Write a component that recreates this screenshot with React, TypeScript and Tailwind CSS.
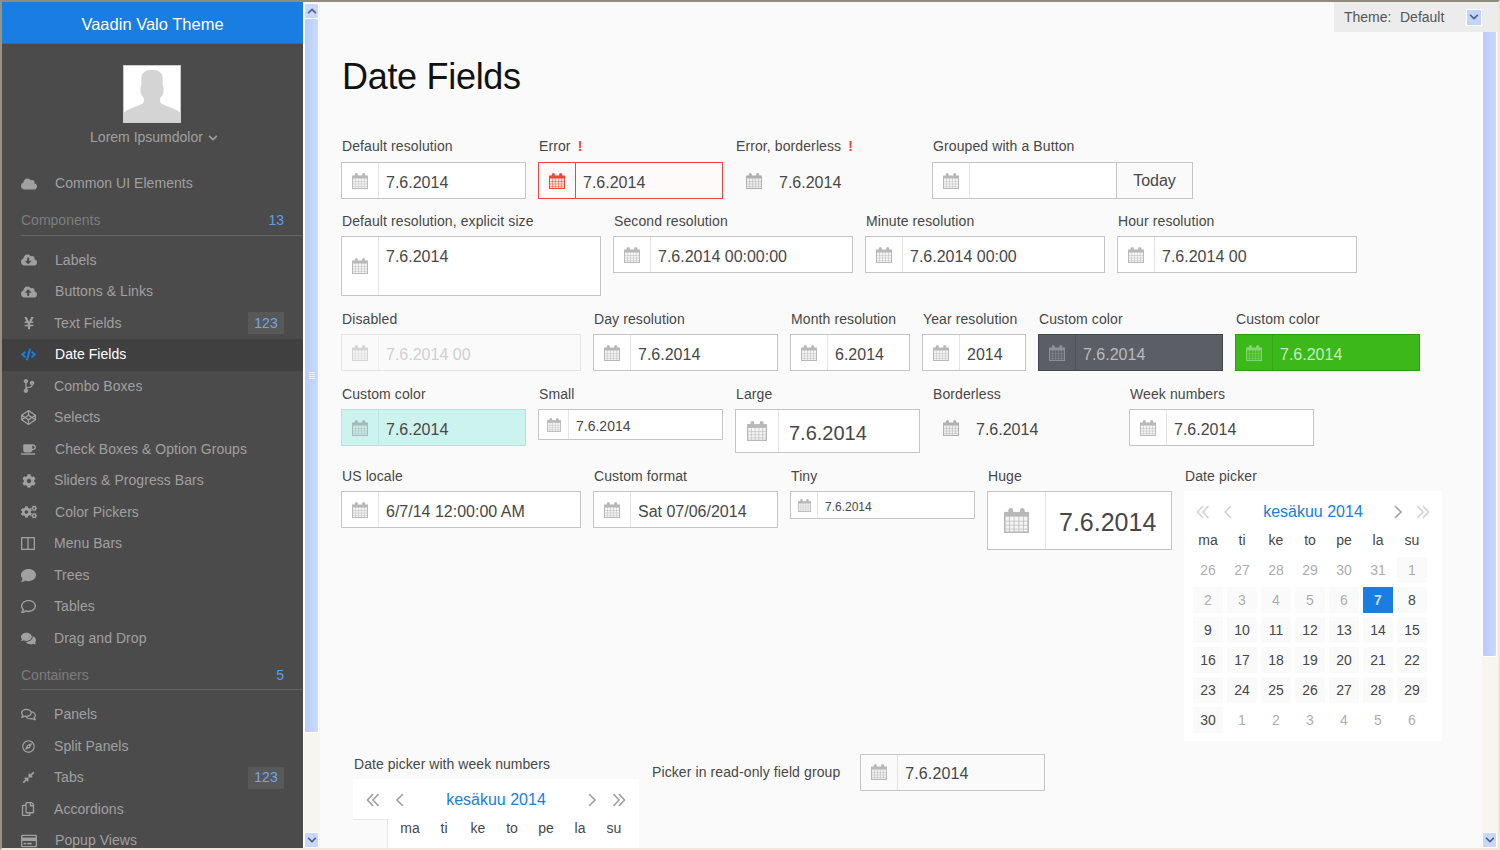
import type { ReactNode } from "react";
import {
  FaChevronDown,
  FaChevronUp,
  FaCloud,
  FaCloudDownloadAlt,
  FaCloudUploadAlt,
  FaCode,
  FaCodeBranch,
  FaCodepen,
  FaCoffee,
  FaCog,
  FaCogs,
  FaComment,
  FaComments,
  FaCompressAlt,
  FaRegComment,
  FaRegComments,
  FaRegCompass,
  FaRegCopy,
  FaRegCreditCard,
  FaYenSign,
} from "react-icons/fa";

const font = "font-['Liberation_Sans',Arial,sans-serif]";

function CalendarIcon({ size = 16 }: { size?: number }) {
  return (
    <svg width={size} height={size} viewBox="0 0 16 16" fill="none">
      <rect x="0.5" y="3" width="15" height="12.5" fill="currentColor" fillOpacity="0.15" stroke="currentColor" />
      <rect x="0" y="3" width="16" height="2.5" fill="currentColor" />
      <rect x="2.8" y="0" width="3" height="4.5" rx="1.5" fill="currentColor" />
      <rect x="10.2" y="0" width="3" height="4.5" rx="1.5" fill="currentColor" />
      <path
        d="M0 8.5H16M0 11H16M0 13.5H16M3.5 5V16M6.5 5V16M9.5 5V16M12.5 5V16"
        stroke="currentColor"
        strokeOpacity="0.75"
        strokeWidth="0.6"
      />
    </svg>
  );
}

function ColumnsIcon() {
  return (
    <svg width="14" height="13" viewBox="0 0 14 13" fill="none" stroke="currentColor" strokeWidth="1.3">
      <rect x="0.65" y="0.65" width="12.7" height="11.7" />
      <path d="M7 0.65V12.35" />
    </svg>
  );
}

function Angle({ dir, double, className = "" }: { dir: "left" | "right"; double?: boolean; className?: string }) {
  const d = double ? "M7 1L1.5 7L7 13M12.5 1L7 7L12.5 13" : "M10 1L4 7L10 13";
  return (
    <svg
      width="14"
      height="14"
      viewBox="0 0 14 14"
      fill="none"
      stroke="currentColor"
      strokeWidth="1.6"
      className={`${dir === "right" ? "rotate-180" : ""} ${className}`}
    >
      <path d={d} />
    </svg>
  );
}

function Avatar() {
  return (
    <svg width="58" height="58" viewBox="0 0 58 58" className="mr-[2px] border border-[#cccccc] bg-white">
      <path
        d="M0 58V48C5 44 13 42 19 39C21 38 21 35 20 32C18 31 17 28 17 25C17 23 17 21 18 20V12C18 7 23 4 29 4C35 4 40 7 40 12V20C41 21 41 23 41 25C41 28 40 31 38 32C37 35 37 38 39 39C45 42 53 44 58 48V58Z"
        fill="#d4d4d4"
      />
    </svg>
  );
}

type NavItem = { icon: ReactNode; label: string; badge?: string; active?: boolean; far?: boolean };

const components: NavItem[] = [
  { icon: <FaCloudDownloadAlt size={16} />, label: "Labels", far: true },
  { icon: <FaCloudUploadAlt size={16} />, label: "Buttons & Links", far: true },
  { icon: <FaYenSign size={14} className="ml-[1px]" />, label: "Text Fields", badge: "123" },
  { icon: <FaCode size={15} />, label: "Date Fields", active: true, far: true },
  { icon: <FaCodeBranch size={14} className="ml-[1px]" />, label: "Combo Boxes" },
  { icon: <FaCodepen size={15} />, label: "Selects" },
  { icon: <FaCoffee size={15} />, label: "Check Boxes & Option Groups", far: true },
  { icon: <FaCog size={14} className="ml-[1px]" />, label: "Sliders & Progress Bars" },
  { icon: <FaCogs size={16} />, label: "Color Pickers", far: true },
  { icon: <ColumnsIcon />, label: "Menu Bars" },
  { icon: <FaComment size={15} />, label: "Trees" },
  { icon: <FaRegComment size={15} />, label: "Tables" },
  { icon: <FaComments size={15} />, label: "Drag and Drop" },
];

const containers: NavItem[] = [
  { icon: <FaRegComments size={15} />, label: "Panels" },
  { icon: <FaRegCompass size={13} className="ml-[1px]" />, label: "Split Panels" },
  { icon: <FaCompressAlt size={13} className="ml-[1px]" />, label: "Tabs", badge: "123" },
  { icon: <FaRegCopy size={14} />, label: "Accordions" },
  { icon: <FaRegCreditCard size={16} />, label: "Popup Views", far: true },
];

function NavRow({ item }: { item: NavItem }) {
  return (
    <div
      className={`flex h-[31.5px] items-center pl-[19px] pr-[19px] text-[14px] tracking-[0.05px] ${
        item.active ? "bg-[#404040] text-white" : "text-[#a0a0a0]"
      }`}
    >
      <span className={`${item.far ? "w-[34px]" : "w-[33px]"} ${item.active ? "text-[#197de1]" : ""}`}>{item.icon}</span>
      <span className="flex-1">{item.label}</span>
      {item.badge && (
        <span className="flex h-[22px] w-[36px] items-center justify-center bg-[#585858] text-[#6fa8e6]">{item.badge}</span>
      )}
    </div>
  );
}

function NavSection({ title, count }: { title: string; count: string }) {
  return (
    <div className="mb-[9px] ml-[19px] flex h-[36px] items-center justify-between border-b border-[#626262] pr-[19px] pt-[7px] text-[14px]">
      <span className="text-[#7d7d7d]">{title}</span>
      <span className="text-[#5f9fe6]">{count}</span>
    </div>
  );
}

function Sidebar() {
  return (
    <aside className="h-full w-[301px] shrink-0 overflow-hidden bg-[#4b4b4b]">
      <div className="flex h-[42px] items-center justify-center border-b border-[#1a6fc4] bg-[#197de1] pt-[3px] text-[16.5px] text-white">
        Vaadin Valo Theme
      </div>
      <div className="flex flex-col items-center pt-[21px]">
        <Avatar />
        <div className="ml-[3px] mt-1 flex h-5 items-center gap-[5px] text-[14px] text-[#a0a0a0]">
          Lorem Ipsumdolor
          <FaChevronDown size={10} className="mt-[2px]" />
        </div>
      </div>
      <div className="mt-[21px]">
        <NavRow item={{ icon: <FaCloud size={16} />, label: "Common UI Elements", far: true }} />
        <NavSection title="Components" count="13" />
        {components.map((item) => (
          <NavRow key={item.label} item={item} />
        ))}
        <NavSection title="Containers" count="5" />
        {containers.map((item) => (
          <NavRow key={item.label} item={item} />
        ))}
      </div>
    </aside>
  );
}

function ScrollButton({ up }: { up?: boolean }) {
  return (
    <div className="flex h-4 w-[15px] shrink-0 items-center justify-center rounded-[2px] border border-white bg-[#c8d7fb] text-[#4d6185]">
      {up ? <FaChevronUp size={10} /> : <FaChevronDown size={10} />}
    </div>
  );
}

function Scrollbar({ thumb, grip }: { thumb: string; grip?: boolean }) {
  return (
    <div className="flex h-full w-4 shrink-0 flex-col bg-[#f6f5ee] pt-px">
      <ScrollButton up />
      <div
        className={`${thumb} flex w-[15px] shrink-0 flex-col items-center justify-center gap-px rounded-[2px] border-x border-b border-white bg-gradient-to-r from-[#b9ccf8] to-[#cbd9fb]`}
      >
        {grip && (
          <>
            <span className="h-px w-[6px] bg-[#eef2ff]" />
            <span className="h-px w-[6px] bg-[#eef2ff]" />
            <span className="h-px w-[6px] bg-[#eef2ff]" />
            <span className="h-px w-[6px] bg-[#eef2ff]" />
          </>
        )}
      </div>
      <div className="flex-1" />
      <ScrollButton />
    </div>
  );
}

const sizes = {
  normal: { box: "h-[37px] text-[16px]", cell: "w-[37px]", text: "pl-[7px]", icon: 16 },
  small: { box: "h-[31px] text-[14px]", cell: "w-[30px]", text: "pl-[7px]", icon: 14 },
  large: { box: "h-[44px] text-[20px]", cell: "w-[43px]", text: "pl-[10px]", icon: 20 },
  tiny: { box: "h-[28px] text-[12px]", cell: "w-[27px]", text: "pl-[7px]", icon: 13 },
  huge: { box: "h-[59px] text-[25px]", cell: "w-[58px]", text: "pl-[13px]", icon: 25 },
  tall: { box: "h-[60px] text-[16px]", cell: "w-[37px]", text: "pl-[7px]", icon: 16 },
};

const variants = {
  normal: { box: "border-[#c5c5c5] bg-white text-[#474747]", cell: "border-[#e4e4e4] text-[#b8b8b8]" },
  error: { box: "border-[#ed473b] bg-[#fffafa] text-[#474747]", cell: "border-[#ed473b] text-[#ed473b]" },
  borderless: { box: "border-transparent bg-transparent text-[#474747]", cell: "border-transparent text-[#b0b0b0]" },
  disabled: { box: "border-[#e6e6e6] bg-[#fafafa] text-[#d0d0d0]", cell: "border-[#eeeeee] text-[#d4d4d4]" },
  dark: { box: "border-[#45474d] bg-[#5c5e66] text-[#b9bbbf]", cell: "border-[#50525a] text-[#8e9096]" },
  green: { box: "border-[#2f9a16] bg-[#3cb91a] text-[#c8ebbf]", cell: "border-[#35a817] text-[#84d670]" },
  cyan: { box: "border-[#b6e0dc] bg-[#cdf3ef] text-[#474747]", cell: "border-[#bfe6e2] text-[#a7b9b8]" },
  readonly: { box: "border-[#c5c5c5] bg-[#fafafa] text-[#474747]", cell: "border-[#e4e4e4] text-[#b8b8b8]" },
};

function DateField({
  value = "7.6.2014",
  size = "normal",
  variant = "normal",
  width = "w-full",
}: {
  value?: string;
  size?: keyof typeof sizes;
  variant?: keyof typeof variants;
  width?: string;
}) {
  const s = sizes[size];
  const v = variants[variant];
  return (
    <div className={`flex border ${s.box} ${v.box} ${width}`}>
      <div className={`flex shrink-0 items-center justify-center border-r ${s.cell} ${v.cell}`}>
        <CalendarIcon size={s.icon} />
      </div>
      <div
        className={`flex flex-1 ${s.text} ${variant === "borderless" ? "-ml-px" : ""} ${
          size === "tall" ? "items-start pt-[10px] leading-[20px]" : "items-center pt-[4px]"
        }`}
      >
        {value}
      </div>
    </div>
  );
}

function Labeled({
  label,
  bang,
  tight,
  width,
  children,
}: {
  label: string;
  bang?: boolean;
  tight?: boolean;
  width: string;
  children: ReactNode;
}) {
  return (
    <div className={`${width} shrink-0`}>
      <div
        className={`h-[23px] whitespace-nowrap pl-px text-[14px] tracking-[0.1px] text-[#474747] ${
          tight ? "leading-[15px]" : "leading-[16px]"
        }`}
      >
        {label}
        {bang && <span className="ml-[7px] font-bold text-[#ed473b]">!</span>}
      </div>
      {children}
    </div>
  );
}

const firstWeek = ["26", "27", "28", "29", "30", "31", "1"];
const weeks = [
  ["2", "3", "4", "5", "6", "7", "8"],
  ["9", "10", "11", "12", "13", "14", "15"],
  ["16", "17", "18", "19", "20", "21", "22"],
  ["23", "24", "25", "26", "27", "28", "29"],
];
const lastWeek = ["30", "1", "2", "3", "4", "5", "6"];

function Cell({ day, kind }: { day: string; kind: "out" | "off" | "on" | "sel" }) {
  const cls = {
    out: "text-[#adadad]",
    off: "bg-[#fafafa] text-[#adadad]",
    on: "bg-[#fafafa] text-[#474747]",
    sel: "bg-[#197de1] font-bold text-[#c8dcf5]",
  }[kind];
  return <div className={`flex h-[26px] items-center justify-center ${cls}`}>{day}</div>;
}

function DatePicker({ weekNumbers }: { weekNumbers?: boolean }) {
  const muted = weekNumbers ? "text-[#a0a0a0]" : "text-[#d2d2d2]";
  return (
    <div className={`bg-white ${weekNumbers ? "w-[286px]" : "w-[258px] pb-2"}`}>
      <div className={`flex h-10 items-center pt-[2px] ${weekNumbers ? "px-[13px]" : "px-3"}`}>
        <div className={`flex items-center ${weekNumbers ? "gap-[13px]" : "gap-[11px]"} ${muted}`}>
          <Angle dir="left" double />
          <Angle dir="left" />
        </div>
        <div className="flex-1 text-center text-[16px] text-[#197de1]">kesäkuu 2014</div>
        <div className={`flex items-center ${weekNumbers ? "gap-[13px]" : "gap-[11px]"}`}>
          <Angle dir="right" className="text-[#a0a0a0]" />
          <Angle dir="right" double className={muted} />
        </div>
      </div>
      <div className="flex">
        {weekNumbers && <div className="mr-[7px] h-[240px] w-[35px] border-r border-t border-[#e8e8e8] bg-[#fafafa]" />}
        <div className={`grid grid-cols-[repeat(7,30px)] gap-x-1 gap-y-1 text-[14px] ${weekNumbers ? "" : "ml-[9px]"}`}>
          <div className="col-span-7 mb-[4px] grid h-[18px] grid-cols-[repeat(7,30px)] gap-x-1 text-center leading-[18px] text-[#474747]">
            {["ma", "ti", "ke", "to", "pe", "la", "su"].map((d) => (
              <span key={d}>{d}</span>
            ))}
          </div>
          {/* the picker below the fold only shows the top of its first row of cells */}
          {firstWeek.map((d, i) => (
            <Cell key={`a${i}`} day={weekNumbers ? "" : d} kind={i === 6 ? "off" : "out"} />
          ))}
          {!weekNumbers &&
            weeks.map((week, w) =>
              week.map((d, i) => (
                <Cell key={`w${w}${i}`} day={d} kind={d === "7" ? "sel" : w === 0 && i < 5 ? "off" : "on"} />
              )),
            )}
          {!weekNumbers && lastWeek.map((d, i) => <Cell key={`z${i}`} day={d} kind={i === 0 ? "on" : "out"} />)}
        </div>
      </div>
    </div>
  );
}

function Content() {
  return (
    <main className="h-full flex-1 overflow-hidden bg-[#fafafa] pl-[21px]">
      <h1 className="pl-px pt-[51px] text-[36px] leading-[48px] tracking-[-0.3px] text-[#111111]">Date Fields</h1>
      <div className="mt-[38px] flex gap-3">
        <Labeled label="Default resolution" tight width="w-[185px]"><DateField /></Labeled>
        <Labeled label="Error" bang tight width="w-[185px]"><DateField variant="error" /></Labeled>
        <Labeled label="Error, borderless" bang tight width="w-[185px]"><DateField variant="borderless" /></Labeled>
        <Labeled label="Grouped with a Button" tight width="w-[261px]">
          <div className="flex">
            <DateField value="" width="w-[185px]" />
            <div className="-ml-px flex h-[37px] w-[77px] items-center justify-center border border-[#c5c5c5] bg-[#fafafa] text-[16px] text-[#474747]">
              Today
            </div>
          </div>
        </Labeled>
      </div>
      <div className="mt-[14px] flex gap-3">
        <Labeled label="Default resolution, explicit size" width="w-[260px]"><DateField size="tall" /></Labeled>
        <Labeled label="Second resolution" width="w-[240px]"><DateField value="7.6.2014 00:00:00" /></Labeled>
        <Labeled label="Minute resolution" width="w-[240px]"><DateField value="7.6.2014 00:00" /></Labeled>
        <Labeled label="Hour resolution" width="w-[240px]"><DateField value="7.6.2014 00" /></Labeled>
      </div>
      <div className="mt-[15px] flex gap-3">
        <Labeled label="Disabled" width="w-[240px]"><DateField value="7.6.2014 00" variant="disabled" /></Labeled>
        <Labeled label="Day resolution" width="w-[185px]"><DateField /></Labeled>
        <Labeled label="Month resolution" width="w-[120px]"><DateField value="6.2014" /></Labeled>
        <Labeled label="Year resolution" width="w-[104px]"><DateField value="2014" /></Labeled>
        <Labeled label="Custom color" width="w-[185px]"><DateField variant="dark" /></Labeled>
        <Labeled label="Custom color" width="w-[185px]"><DateField variant="green" /></Labeled>
      </div>
      <div className="mt-[15px] flex gap-3">
        <Labeled label="Custom color" width="w-[185px]"><DateField variant="cyan" /></Labeled>
        <Labeled label="Small" width="w-[185px]"><DateField size="small" /></Labeled>
        <Labeled label="Large" width="w-[185px]"><DateField size="large" /></Labeled>
        <Labeled label="Borderless" width="w-[185px]"><DateField variant="borderless" /></Labeled>
        <Labeled label="Week numbers" width="w-[185px]"><DateField /></Labeled>
      </div>
      <div className="mt-[15px] flex gap-3">
        <Labeled label="US locale" width="w-[240px]"><DateField value="6/7/14 12:00:00 AM" /></Labeled>
        <Labeled label="Custom format" width="w-[185px]"><DateField value="Sat 07/06/2014" /></Labeled>
        <Labeled label="Tiny" width="w-[185px]"><DateField size="tiny" /></Labeled>
        <Labeled label="Huge" width="w-[185px]"><DateField size="huge" /></Labeled>
        <Labeled label="Date picker" width="w-[258px]"><DatePicker /></Labeled>
      </div>
      <div className="ml-3 mt-3 flex gap-[13px]">
        <div className="w-[286px] shrink-0 pt-[4px]">
          <div className="h-[22px] pl-px text-[14px] leading-[15px] tracking-[0.05px] text-[#474747]">Date picker with week numbers</div>
          <DatePicker weekNumbers />
        </div>
        <div className="flex h-[37px] items-center gap-[20px] pt-px text-[14px] tracking-[0.1px] text-[#474747]">
          Picker in read-only field group
          <DateField variant="readonly" width="w-[185px]" />
        </div>
      </div>
    </main>
  );
}

export default function App() {
  return (
    <div className={`${font} relative flex h-[850px] w-[1500px] overflow-hidden border-2 border-b-[#ece9d8] border-l-[#96937f] border-r-[#ece9d8] border-t-[#8f8c7e]`}>
      <Sidebar />
      <div className="w-px shrink-0 bg-white" />
      <Scrollbar thumb="h-[714px]" grip />
      <Content />
      <Scrollbar thumb="h-[638px]" />
      <div className="absolute right-0 top-0 flex h-[30px] w-[164px] items-center bg-[#ececec] pl-[10px] text-[14px] text-[#555555]">
        <span className="w-[56px]">Theme:</span>
        <span className="w-[66px]">Default</span>
        <div className="flex h-[17px] w-4 items-center justify-center border border-white bg-[#c3d4fb] text-[#4d6185]">
          <FaChevronDown size={10} />
        </div>
      </div>
    </div>
  );
}
